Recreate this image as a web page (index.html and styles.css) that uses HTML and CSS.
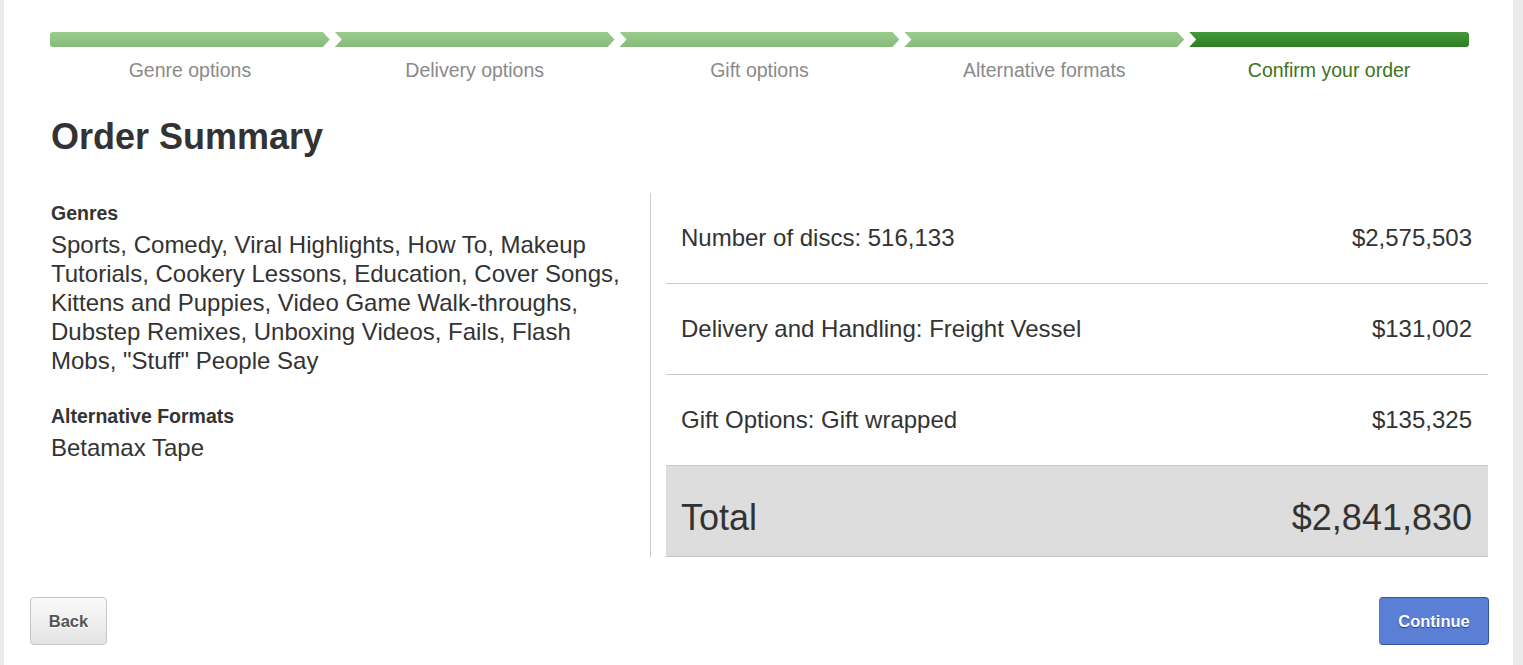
FILE: index.html
```html
<!DOCTYPE html>
<html lang="en">
<head>
<meta charset="utf-8">
<title>Order Summary</title>
<link rel="stylesheet" href="styles.css">
</head>
<body>
<div class="page">
  <div class="steps">
    <div class="step first done"><div class="bar"></div><div class="label">Genre options</div></div>
    <div class="step done"><div class="bar"></div><div class="label">Delivery options</div></div>
    <div class="step done"><div class="bar"></div><div class="label">Gift options</div></div>
    <div class="step done"><div class="bar"></div><div class="label">Alternative formats</div></div>
    <div class="step last active"><div class="bar"></div><div class="label">Confirm your order</div></div>
  </div>

  <h1 class="title">Order Summary</h1>

  <div class="summary">
    <div class="details">
      <h2 class="details-head">Genres</h2>
      <p class="details-text">Sports, Comedy, Viral Highlights, How To, Makeup Tutorials, Cookery Lessons, Education, Cover Songs, Kittens and Puppies, Video Game Walk-throughs, Dubstep Remixes, Unboxing Videos, Fails, Flash Mobs, "Stuff" People Say</p>
      <h2 class="details-head spaced">Alternative Formats</h2>
      <p class="details-text">Betamax Tape</p>
    </div>
    <div class="costs">
      <div class="row"><span>Number of discs: 516,133</span><span>$2,575,503</span></div>
      <div class="row"><span>Delivery and Handling: Freight Vessel</span><span>$131,002</span></div>
      <div class="row"><span>Gift Options: Gift wrapped</span><span>$135,325</span></div>
      <div class="row total"><span>Total</span><span>$2,841,830</span></div>
    </div>
  </div>

  <div class="actions">
    <button class="btn btn-back">Back</button>
    <button class="btn btn-continue">Continue</button>
  </div>
</div>
</body>
</html>
```

FILE: styles.css
```css
html, body {
  margin: 0;
  padding: 0;
}
body {
  background: #ebebeb;
  font-family: "Liberation Sans", Arial, sans-serif;
  color: #333;
}
.page {
  margin-left: 4px;
  width: 1509px;
  min-height: 665px;
  background: #fff;
  box-sizing: border-box;
  padding: 32px 24px 0 26px;
}
.steps {
  display: flex;
  gap: 5px;
  margin: 0 20px;
}
.step {
  flex: 1;
  display: flex;
  flex-direction: column;
  align-items: stretch;
}
.bar {
  height: 15px;
  background: linear-gradient(#9acb8e, #86bc7a);
  clip-path: polygon(0 0, calc(100% - 7px) 0, 100% 50%, calc(100% - 7px) 100%, 0 100%, 7px 50%);
}
.step.first .bar {
  clip-path: polygon(0 0, calc(100% - 7px) 0, 100% 50%, calc(100% - 7px) 100%, 0 100%);
  border-radius: 3px 0 0 3px;
}
.step.last .bar {
  clip-path: polygon(0 0, 100% 0, 100% 100%, 0 100%, 7px 50%);
  border-radius: 0 3px 3px 0;
}
.step.active .bar {
  background: linear-gradient(#43993a, #2f7d26);
}
.label {
  margin-top: 11px;
  text-align: center;
  font-size: 19.5px;
  line-height: 24px;
  color: #8a8a8a;
}
.step.active .label {
  color: #3b7320;
}
.title {
  margin: 34px 0 0 21px;
  font-size: 36px;
  line-height: 42px;
  font-weight: bold;
  color: #333;
}
.summary {
  display: flex;
  margin: 35px 1px 0 21px;
}
.details {
  width: 600px;
  box-sizing: border-box;
  padding: 8px 20px 0 0;
  border-right: 1px solid #c9c9c9;
}
.details-head {
  margin: 0;
  font-size: 19.5px;
  line-height: 24px;
  font-weight: bold;
  color: #333;
}
.details-head.spaced {
  margin-top: 29px;
}
.details-text {
  margin: 5px 0 0;
  font-size: 24px;
  line-height: 29px;
  color: #333;
}
.costs {
  flex: 1;
  margin-left: 15px;
}
.row {
  display: flex;
  justify-content: space-between;
  align-items: center;
  height: 90px;
  padding: 0 16px 0 15px;
  border-bottom: 1px solid #cccccc;
  font-size: 24px;
  color: #333;
}
.row.total {
  background: #dddddd;
  font-size: 36px;
  padding-top: 14px;
  box-sizing: border-box;
  height: 91px;
  border-bottom: 1px solid #c4c4c4;
}
.actions {
  display: flex;
  justify-content: space-between;
  margin-top: 40px;
}
.btn {
  height: 48px;
  font-family: "Liberation Sans", Arial, sans-serif;
  font-size: 16.5px;
  font-weight: bold;
  border-radius: 4px;
  cursor: pointer;
}
.btn-back {
  width: 77px;
  color: #555;
  background: linear-gradient(#fafafa, #e4e4e4);
  border: 1px solid #c6c6c6;
  text-shadow: 0 1px 0 #fff;
}
.btn-continue {
  width: 110px;
  color: #fff;
  background: #5a7fd5;
  border: 1px solid #32519f;
  border-left-color: #777;
  text-shadow: 0 1px 1px #2a3f80;
}
```
